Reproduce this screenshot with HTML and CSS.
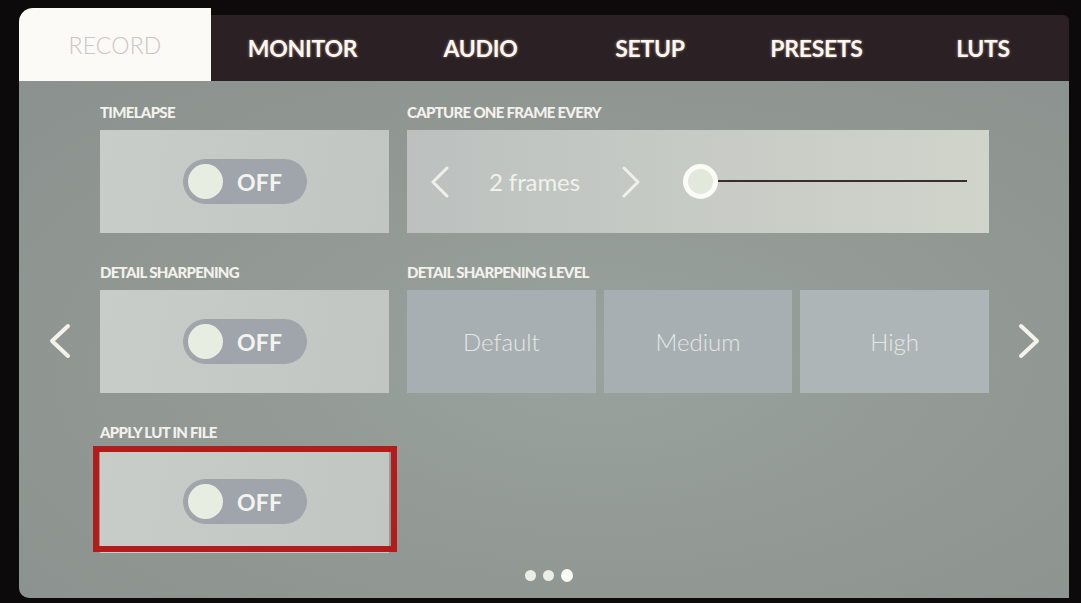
FILE: index.html
```html
<!DOCTYPE html>
<html>
<head>
<meta charset="utf-8">
<link rel="stylesheet" href="styles.css">
</head>
<body>
<div class="screen">
  <div class="tabs">
    <div class="tab-active">RECORD</div>
    <div class="tabbar">
      <div class="tab t1">MONITOR</div>
      <div class="tab t2">AUDIO</div>
      <div class="tab t3">SETUP</div>
      <div class="tab t4">PRESETS</div>
      <div class="tab t5">LUTS</div>
    </div>
  </div>
  <div class="panel">
    <div class="pager pager-left">
      <svg width="26" height="36" viewBox="0 0 26 36"><polyline points="21,3 5,18 21,33" fill="none" stroke="#f4f2ea" stroke-width="4" stroke-linecap="round" stroke-linejoin="round"/></svg>
    </div>
    <div class="content">
      <div class="section">
        <div class="label">TIMELAPSE</div>
        <div class="card card-toggle">
          <div class="toggle"><span class="knob"></span><span class="toggle-text">OFF</span></div>
        </div>
      </div>
      <div class="section">
        <div class="label">CAPTURE ONE FRAME EVERY</div>
        <div class="card card-capture">
          <svg class="chev chev-l" width="22" height="32" viewBox="0 0 22 32"><polyline points="18,2 4,16 18,30" fill="none" stroke="#eef1ea" stroke-width="3" stroke-linecap="round" stroke-linejoin="round"/></svg>
          <span class="frames">2 frames</span>
          <svg class="chev chev-r" width="22" height="32" viewBox="0 0 22 32"><polyline points="4,2 18,16 4,30" fill="none" stroke="#eef1ea" stroke-width="3" stroke-linecap="round" stroke-linejoin="round"/></svg>
          <div class="slider"><span class="slider-knob"></span><span class="slider-line"></span></div>
        </div>
      </div>
      <div class="section">
        <div class="label">DETAIL SHARPENING</div>
        <div class="card card-toggle">
          <div class="toggle"><span class="knob"></span><span class="toggle-text">OFF</span></div>
        </div>
      </div>
      <div class="section">
        <div class="label">DETAIL SHARPENING LEVEL</div>
        <div class="levels">
          <div class="level">Default</div>
          <div class="level">Medium</div>
          <div class="level">High</div>
        </div>
      </div>
      <div class="section">
        <div class="label">APPLY LUT IN FILE</div>
        <div class="card-wrap">
          <div class="card card-toggle">
            <div class="toggle"><span class="knob"></span><span class="toggle-text">OFF</span></div>
          </div>
          <div class="highlight"></div>
        </div>
      </div>
    </div>
    <div class="dots"><span class="dot"></span><span class="dot"></span><span class="dot dot-active"></span></div>
    <div class="pager pager-right">
      <svg width="26" height="36" viewBox="0 0 26 36"><polyline points="5,3 21,18 5,33" fill="none" stroke="#f4f2ea" stroke-width="4" stroke-linecap="round" stroke-linejoin="round"/></svg>
    </div>
  </div>
</div>
</body>
</html>
```

FILE: styles.css
```css
* { box-sizing: border-box; }
html, body {
  margin: 0;
  padding: 0;
  background: #0c0a0b;
  width: 1081px;
  height: 603px;
  overflow: hidden;
  font-family: Lato, "Open Sans", "Liberation Sans", sans-serif;
}
.screen {
  padding: 8px 0 0 19px;
  width: 1069px;
}
.tabs {
  display: flex;
  align-items: flex-end;
  height: 73px;
}
.tab-active {
  width: 192px;
  height: 73px;
  background: #fbfaf7;
  border-top-left-radius: 14px;
  display: flex;
  align-items: center;
  justify-content: center;
  color: #cbc6c3;
  font-weight: 300;
  font-size: 23px;
  letter-spacing: 0.2px;
}
.tabbar {
  flex: 1;
  height: 66px;
  background: #2b2125;
  border-top-right-radius: 6px;
  display: flex;
}
.tab {
  display: flex;
  align-items: center;
  justify-content: center;
  padding-bottom: 1px;
  color: #fcf6ef;
  font-weight: 700;
  font-size: 23px;
  letter-spacing: -0.3px;
  text-shadow: 0 0 3px rgba(255, 215, 195, 0.55);
}
.t1 { width: 183px; }
.t2 { width: 173px; }
.t3 { width: 166px; }
.t4 { width: 167px; }
.t5 { flex: 1; padding-right: 3px; }

.panel {
  height: 517px;
  background: radial-gradient(ellipse at 55% 55%, #9aa29e 0%, #929995 50%, #8a918e 100%);
  border-bottom-left-radius: 10px;
  display: grid;
  grid-template-columns: 81px 889px 1fr;
  grid-template-rows: auto 1fr;
}
.pager {
  grid-row: 1 / 3;
  align-self: center;
  justify-self: center;
  display: flex;
  padding-top: 3px;
}
.pager-left { grid-column: 1; }
.pager-right { grid-column: 3; }
.content {
  grid-column: 2;
  grid-row: 1;
  padding-top: 23px;
  display: grid;
  grid-template-columns: 289px 582px;
  column-gap: 18px;
  row-gap: 31px;
}
.label {
  height: 16px;
  line-height: 16px;
  margin-bottom: 10px;
  font-size: 15px;
  font-weight: 900;
  letter-spacing: -0.7px;
  color: #f4f1ec;
  white-space: nowrap;
}
.card {
  height: 103px;
  background: linear-gradient(100deg, #c8cdc9 0%, #c1c6c2 100%);
}
.card-toggle {
  display: flex;
  align-items: center;
  justify-content: center;
}
.toggle {
  width: 124px;
  height: 45px;
  border-radius: 23px;
  background: #9fa5aa;
  display: flex;
  align-items: center;
  padding-left: 5px;
  margin-left: 1px;
}
.knob {
  width: 35px;
  height: 35px;
  border-radius: 50%;
  background: #e7ede0;
}
.toggle-text {
  margin-left: 14px;
  font-size: 23px;
  font-weight: 700;
  color: #f4f4ef;
  letter-spacing: 0.2px;
}
.card-capture {
  display: flex;
  align-items: center;
  padding-left: 22px;
  background: linear-gradient(90deg, #bcc1c0 0%, #c7cbc5 50%, #d0d4cb 100%);
}
.chev { display: block; }
.frames {
  margin-left: 38px;
  width: 92px;
  font-size: 24px;
  font-weight: 400;
  color: #f0f2ec;
  white-space: nowrap;
  letter-spacing: -0.1px;
}
.chev-r { margin-left: 39px; }
.slider {
  display: flex;
  align-items: center;
  margin-left: 41px;
}
.slider-knob {
  width: 35px;
  height: 35px;
  border-radius: 50%;
  background: #e3e8dc;
  border: 5px solid #fbfbf7;
}
.slider-line {
  width: 249px;
  height: 2px;
  background: #3d2c2e;
  margin-top: -1px;
}
.levels {
  display: flex;
  gap: 8px;
  height: 103px;
}
.level {
  flex: 1;
  display: flex;
  align-items: center;
  justify-content: center;
  background: #a8afb3;
  font-size: 24px;
  font-weight: 300;
  color: #e4e8e3;
}
.level:last-child { background: #aeb5b7; }
.card-wrap { position: relative; }
.highlight {
  position: absolute;
  left: -7px;
  top: -4px;
  width: 304px;
  height: 106px;
  border: 6px solid #b41c1c;
}
.dots {
  grid-column: 2;
  grid-row: 2;
  display: flex;
  justify-content: center;
  align-items: center;
  gap: 7px;
  padding-left: 9px;
  height: 36px;
  margin-top: 4px;
}
.dot {
  width: 11px;
  height: 11px;
  border-radius: 50%;
  background: #eceee4;
}
.dot-active {
  width: 12px;
  height: 13px;
  background: #fcfcf6;
}
```
